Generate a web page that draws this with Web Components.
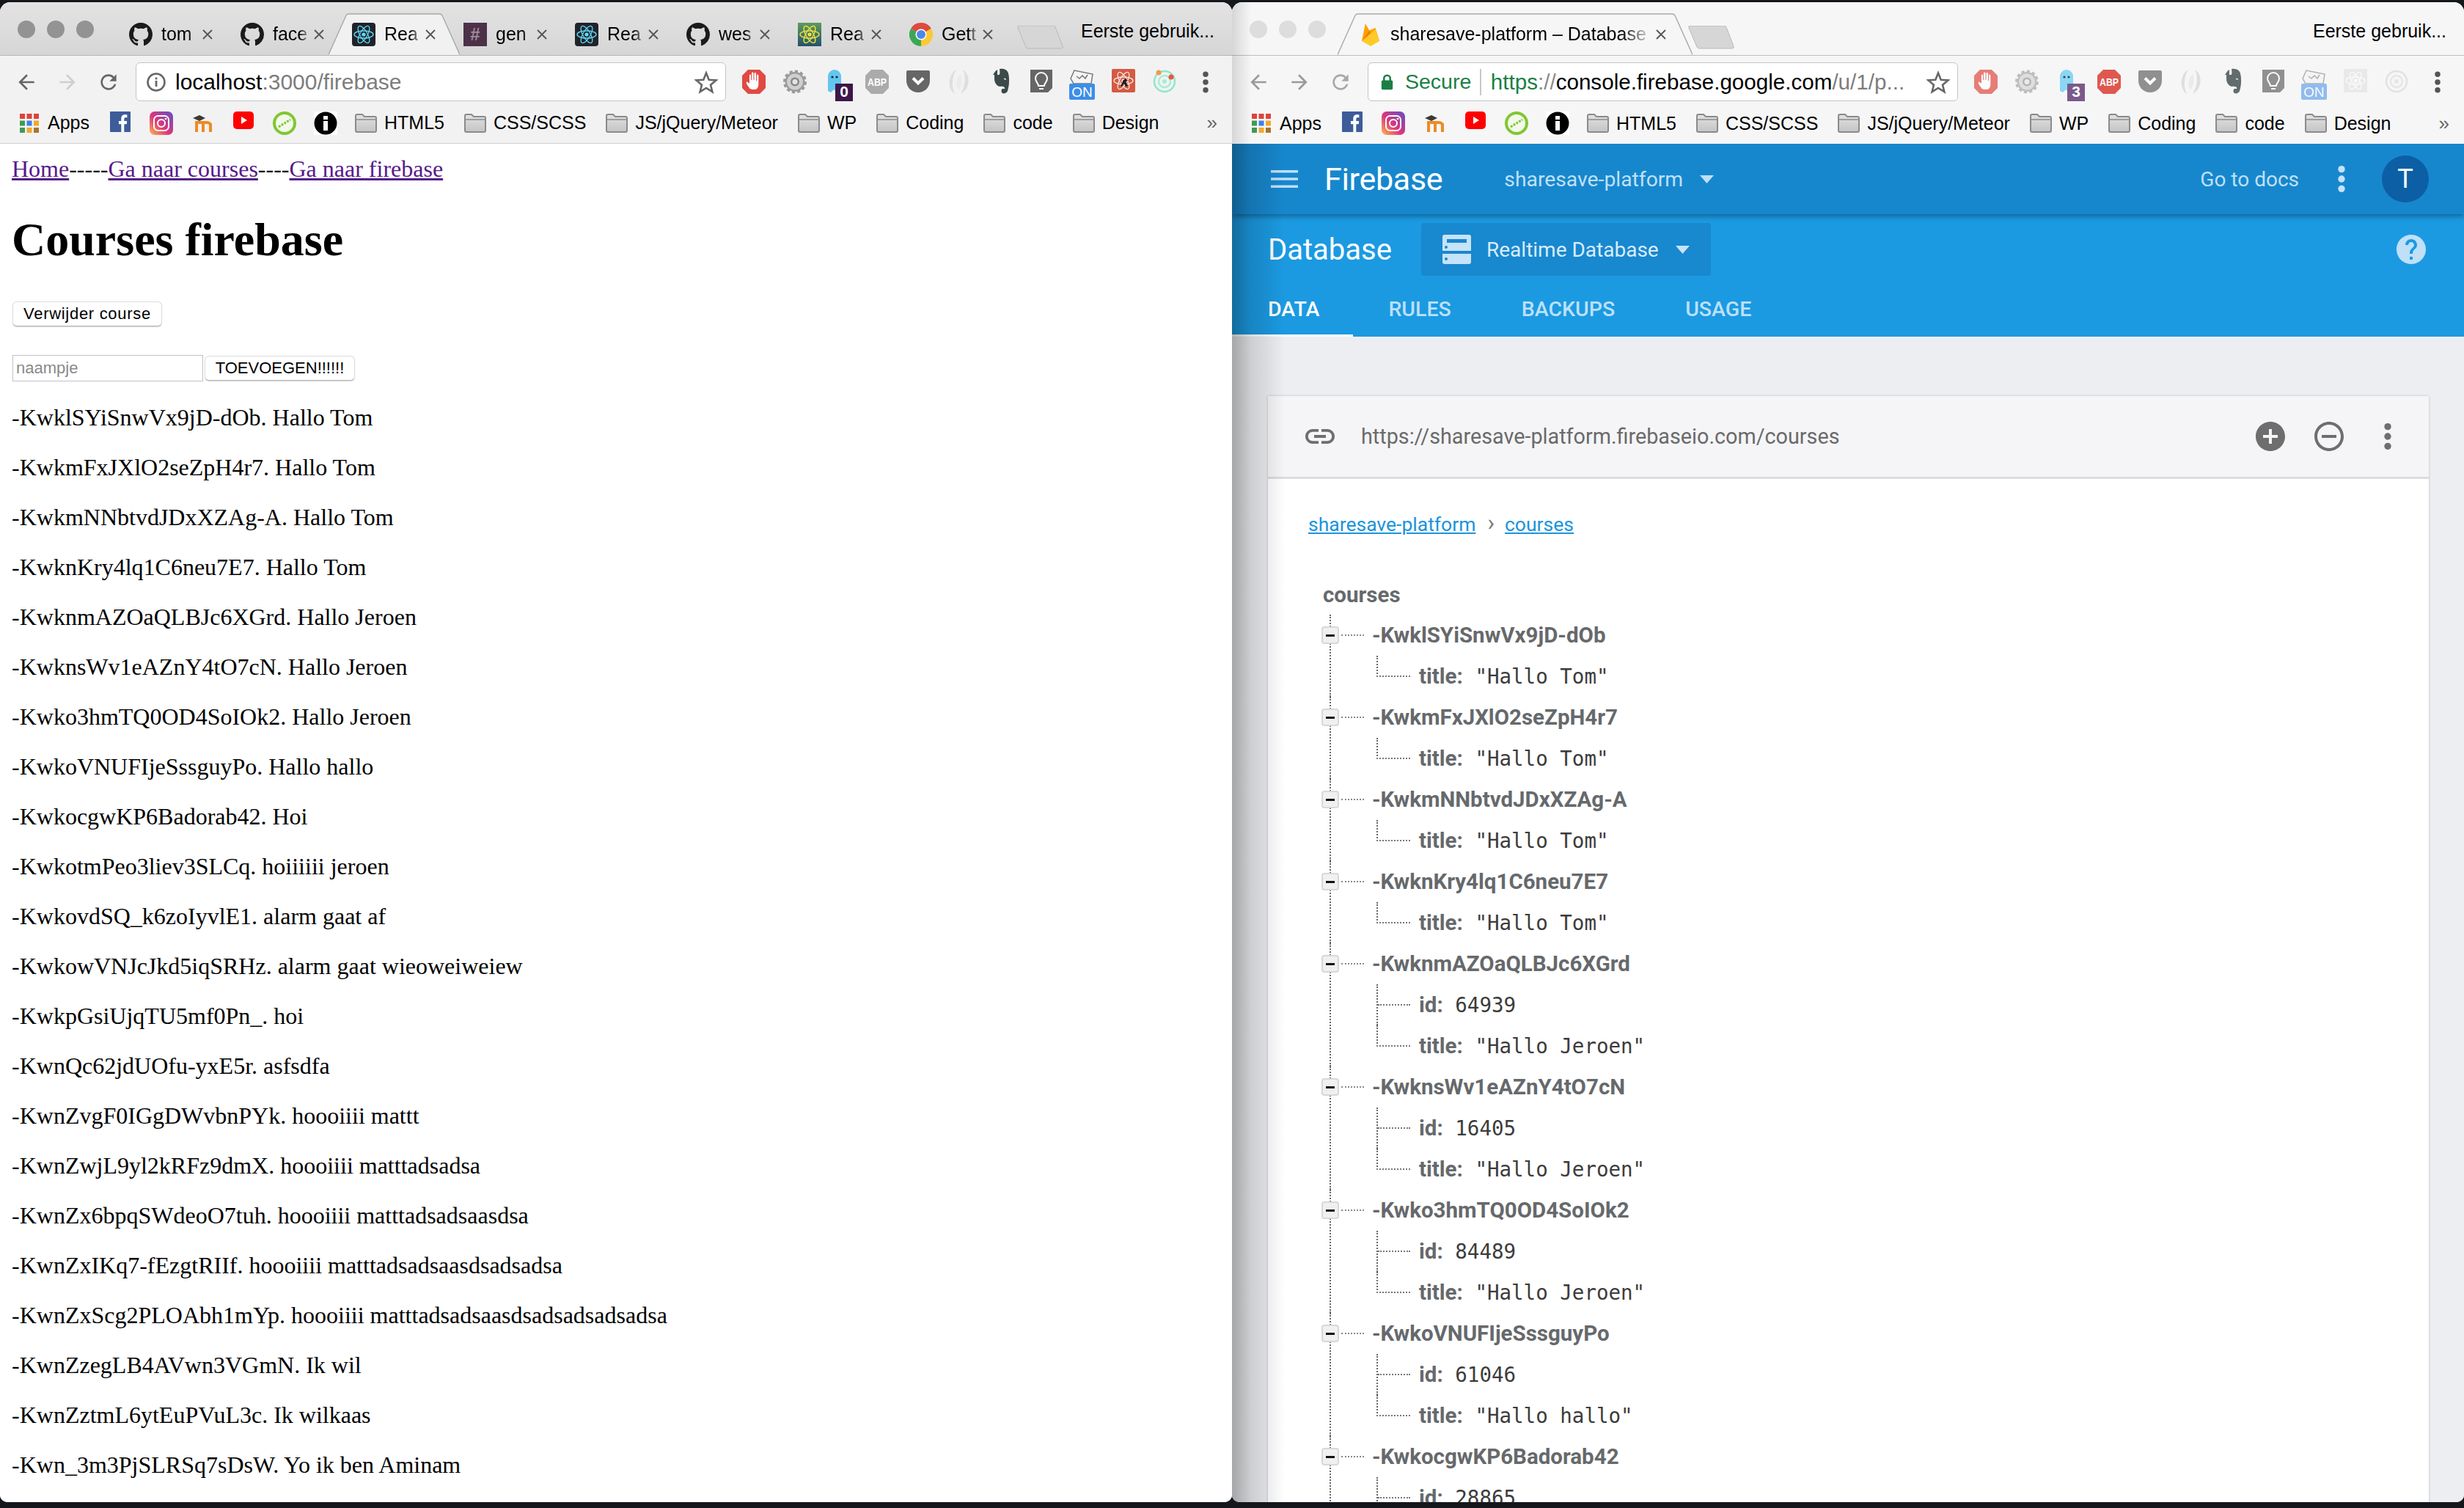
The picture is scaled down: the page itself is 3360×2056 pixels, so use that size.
<!DOCTYPE html>
<html lang="nl">
<head>
<meta charset="utf-8">
<title>Courses firebase</title>
<style>
  html, body { margin: 0; height: 100%; }
  body {
    display: flex;
    box-sizing: border-box;
    width: 3360px;
    height: 2056px;
    padding: 3px 0 8px;
    background: #14181c;
    overflow: hidden;
    font-family: "Liberation Sans", sans-serif;
  }
</style>
</head>
<body>

<browser-window>
  <browser-tab slot="tabs" icon="github" title-text="tom"></browser-tab>
  <browser-tab slot="tabs" icon="github" title-text="face"></browser-tab>
  <browser-tab slot="tabs" icon="react" title-text="Rea" active></browser-tab>
  <browser-tab slot="tabs" icon="slack" title-text="gen"></browser-tab>
  <browser-tab slot="tabs" icon="react" title-text="Rea"></browser-tab>
  <browser-tab slot="tabs" icon="github" title-text="wes"></browser-tab>
  <browser-tab slot="tabs" icon="reactyellow" title-text="Rea"></browser-tab>
  <browser-tab slot="tabs" icon="chrome" title-text="Gett"></browser-tab>
  <omni-box slot="omni" info>
    <span style="color:#000">localhost</span><span style="color:#7d7d7d">:3000/firebase</span>
  </omni-box>
  <courses-page>
    <course-line>-KwklSYiSnwVx9jD-dOb. Hallo Tom</course-line>
    <course-line>-KwkmFxJXlO2seZpH4r7. Hallo Tom</course-line>
    <course-line>-KwkmNNbtvdJDxXZAg-A. Hallo Tom</course-line>
    <course-line>-KwknKry4lq1C6neu7E7. Hallo Tom</course-line>
    <course-line>-KwknmAZOaQLBJc6XGrd. Hallo Jeroen</course-line>
    <course-line>-KwknsWv1eAZnY4tO7cN. Hallo Jeroen</course-line>
    <course-line>-Kwko3hmTQ0OD4SoIOk2. Hallo Jeroen</course-line>
    <course-line>-KwkoVNUFIjeSssguyPo. Hallo hallo</course-line>
    <course-line>-KwkocgwKP6Badorab42. Hoi</course-line>
    <course-line>-KwkotmPeo3liev3SLCq. hoiiiiii jeroen</course-line>
    <course-line>-KwkovdSQ_k6zoIyvlE1. alarm gaat af</course-line>
    <course-line>-KwkowVNJcJkd5iqSRHz. alarm gaat wieoweiweiew</course-line>
    <course-line>-KwkpGsiUjqTU5mf0Pn_. hoi</course-line>
    <course-line>-KwnQc62jdUOfu-yxE5r. asfsdfa</course-line>
    <course-line>-KwnZvgF0IGgDWvbnPYk. hoooiiii mattt</course-line>
    <course-line>-KwnZwjL9yl2kRFz9dmX. hoooiiii matttadsadsa</course-line>
    <course-line>-KwnZx6bpqSWdeoO7tuh. hoooiiii matttadsadsaasdsa</course-line>
    <course-line>-KwnZxIKq7-fEzgtRIIf. hoooiiii matttadsadsaasdsadsadsa</course-line>
    <course-line>-KwnZxScg2PLOAbh1mYp. hoooiiii matttadsadsaasdsadsadsadsadsa</course-line>
    <course-line>-KwnZzegLB4AVwn3VGmN. Ik wil</course-line>
    <course-line>-KwnZztmL6ytEuPVuL3c. Ik wilkaas</course-line>
    <course-line>-Kwn_3m3PjSLRSq7sDsW. Yo ik ben Aminam</course-line>
  </courses-page>
</browser-window>

<browser-window inactive>
  <browser-tab slot="tabs" icon="firebase" title-text="sharesave-platform – Database" active wide></browser-tab>
  <omni-box slot="omni" secure>
    <span style="color:#1a7f45">https</span><span style="color:#8a8a8a">://</span><span style="color:#000">console.firebase.google.com</span><span style="color:#7d7d7d">/u/1/p...</span>
  </omni-box>
  <fb-console>
    <fb-node key="-KwklSYiSnwVx9jD-dOb"><fb-leaf name="title" value='"Hallo Tom"' last></fb-leaf></fb-node>
    <fb-node key="-KwkmFxJXlO2seZpH4r7"><fb-leaf name="title" value='"Hallo Tom"' last></fb-leaf></fb-node>
    <fb-node key="-KwkmNNbtvdJDxXZAg-A"><fb-leaf name="title" value='"Hallo Tom"' last></fb-leaf></fb-node>
    <fb-node key="-KwknKry4lq1C6neu7E7"><fb-leaf name="title" value='"Hallo Tom"' last></fb-leaf></fb-node>
    <fb-node key="-KwknmAZOaQLBJc6XGrd"><fb-leaf name="id" value="64939"></fb-leaf><fb-leaf name="title" value='"Hallo Jeroen"' last></fb-leaf></fb-node>
    <fb-node key="-KwknsWv1eAZnY4tO7cN"><fb-leaf name="id" value="16405"></fb-leaf><fb-leaf name="title" value='"Hallo Jeroen"' last></fb-leaf></fb-node>
    <fb-node key="-Kwko3hmTQ0OD4SoIOk2"><fb-leaf name="id" value="84489"></fb-leaf><fb-leaf name="title" value='"Hallo Jeroen"' last></fb-leaf></fb-node>
    <fb-node key="-KwkoVNUFIjeSssguyPo"><fb-leaf name="id" value="61046"></fb-leaf><fb-leaf name="title" value='"Hallo hallo"' last></fb-leaf></fb-node>
    <fb-node key="-KwkocgwKP6Badorab42"><fb-leaf name="id" value="28865"></fb-leaf></fb-node>
  </fb-console>
</browser-window>

<script>
const reactAtom = (c, sw) => `
  <g fill="none" stroke="${c}" stroke-width="${sw}">
    <ellipse cx="16" cy="16" rx="13" ry="5"/>
    <ellipse cx="16" cy="16" rx="13" ry="5" transform="rotate(60 16 16)"/>
    <ellipse cx="16" cy="16" rx="13" ry="5" transform="rotate(120 16 16)"/>
  </g><circle cx="16" cy="16" r="2.6" fill="${c}"/>`;

const ICONS = {
  github: ['0 0 16 16', '<path fill="#1b1b1b" d="M8 0C3.58 0 0 3.58 0 8c0 3.54 2.29 6.53 5.47 7.59.4.07.55-.17.55-.38 0-.19-.01-.82-.01-1.49-2.01.37-2.53-.49-2.69-.94-.09-.23-.48-.94-.82-1.13-.28-.15-.68-.52-.01-.53.63-.01 1.08.58 1.23.82.72 1.21 1.87.87 2.33.66.07-.52.28-.87.51-1.07-1.78-.2-3.64-.89-3.64-3.95 0-.87.31-1.59.82-2.15-.08-.2-.36-1.02.08-2.12 0 0 .67-.21 2.2.82.64-.18 1.32-.27 2-.27.68 0 1.36.09 2 .27 1.53-1.04 2.2-.82 2.2-.82.44 1.1.16 1.92.08 2.12.51.56.82 1.27.82 2.15 0 3.07-1.87 3.75-3.65 3.95.29.25.54.73.54 1.48 0 1.07-.01 1.93-.01 2.2 0 .21.15.46.55.38A8.013 8.013 0 0016 8c0-4.42-3.58-8-8-8z"/>'],
  react: ['0 0 32 32', `<rect width="32" height="32" rx="4" fill="#20232a"/>${reactAtom('#61dafb', 1.3)}`],
  reactyellow: ['0 0 32 32', `<defs><linearGradient id="ry" x1="0" y1="0" x2="0" y2="1"><stop offset="0" stop-color="#5f9a5c"/><stop offset="1" stop-color="#24506f"/></linearGradient></defs><rect width="32" height="32" fill="url(#ry)"/>${reactAtom('#f2e23c', 1.4)}`],
  slack: ['0 0 32 32', '<rect width="32" height="32" fill="#4c3149"/><text x="16" y="24" font-family="Liberation Sans" font-size="24" font-weight="700" fill="#9d8a9c" text-anchor="middle">#</text>'],
  chrome: ['0 0 32 32', '<path fill="#de4a3d" d="M16 16 2.14 8A16 16 0 0 1 29.86 8Z"/><path fill="#3aa757" d="M16 16 2.14 8A16 16 0 0 0 16 32Z"/><path fill="#fcc934" d="M16 16 29.86 8A16 16 0 0 1 16 32Z"/><circle cx="16" cy="16" r="7.6" fill="#fff"/><circle cx="16" cy="16" r="6" fill="#4b88e8"/>'],
  firebase: ['0 0 26 32', '<path fill="#ffa000" d="M1 25 5.8 1l5.4 9.5L19.6 7 25 25Z"/><path fill="#f57c00" d="M1 25 11.2 10.5 14 16Z"/><path fill="#ffca28" d="M1 25 19.6 9 25 25 13 32Z"/>'],
  back: ['0 0 24 24', '<path fill="currentColor" d="M20 11H7.83l5.59-5.59L12 4l-8 8 8 8 1.41-1.41L7.83 13H20v-2z"/>'],
  forward: ['0 0 24 24', '<path fill="currentColor" d="m12 4-1.41 1.41L16.17 11H4v2h12.17l-5.58 5.59L12 20l8-8z"/>'],
  reload: ['0 0 24 24', '<path fill="currentColor" d="M17.65 6.35C16.2 4.9 14.21 4 12 4c-4.42 0-7.99 3.58-7.99 8s3.57 8 7.99 8c3.73 0 6.84-2.55 7.73-6h-2.08c-.82 2.33-3.04 4-5.65 4-3.31 0-6-2.69-6-6s2.69-6 6-6c1.66 0 3.14.69 4.22 1.78L13 11h7V4l-2.35 2.35z"/>'],
  info: ['0 0 28 28', '<circle cx="14" cy="14" r="11.5" fill="none" stroke="#666" stroke-width="2.6"/><rect x="12.6" y="12" width="2.8" height="8" fill="#666"/><rect x="12.6" y="7.6" width="2.8" height="2.8" fill="#666"/>'],
  lock: ['0 0 20 28', '<path fill="none" stroke="#1a7f45" stroke-width="3" d="M5 12V8a5 5 0 0 1 10 0v4"/><rect x="1" y="11" width="18" height="15" rx="2" fill="#1a7f45"/>'],
  star: ['0 0 32 32', '<path fill="none" stroke="#666" stroke-width="2.6" stroke-linejoin="miter" d="M16 3.5 19.7 12.7 29.5 13.4 22 19.7 24.4 29.2 16 24 7.6 29.2 10 19.7 2.5 13.4 12.3 12.7Z"/>'],
  menu: ['0 0 6 24', '<circle cx="3" cy="4" r="2.8" fill="currentColor"/><circle cx="3" cy="12" r="2.8" fill="currentColor"/><circle cx="3" cy="20" r="2.8" fill="currentColor"/>'],
  apps: ['0 0 26 26', ['#e0433a','#e0433a','#e0433a','#3e9b53','#3f80e8','#f2a82d','#3e9b53','#f2a82d','#a9752c'].map((c, i) => `<rect x="${(i % 3) * 9.5}" y="${Math.floor(i / 3) * 9.5}" width="7" height="7" fill="${c}"/>`).join('')],
  facebook: ['0 0 28 28', '<rect width="28" height="28" rx="1" fill="#3e5c9a"/><path fill="#fff" d="M19.3 28V17.2h3.4l.5-4.2h-3.9v-2.7c0-1.2.3-2 2-2h2.1V4.5c-.4 0-1.6-.2-3-.2-3 0-5.1 1.8-5.1 5.2V13h-3.4v4.2h3.4V28Z"/>'],
  instagram: ['0 0 32 32', '<defs><linearGradient id="ig" x1="0" y1="1" x2="1" y2="0"><stop offset="0" stop-color="#fdb94a"/><stop offset=".45" stop-color="#e0347a"/><stop offset="1" stop-color="#5c52c8"/></linearGradient></defs><rect width="32" height="32" rx="7" fill="url(#ig)"/><rect x="6" y="6" width="20" height="20" rx="5.5" fill="none" stroke="#fff" stroke-width="2"/><circle cx="16" cy="16" r="5" fill="none" stroke="#fff" stroke-width="2"/><circle cx="22" cy="10" r="1.3" fill="#fff"/>'],
  moodle: ['0 0 32 32', '<path fill="none" stroke="#f08a24" stroke-width="4" d="M8 28V15M17 28V16M27 28V16M6 15h16c3.5 0 5 2 5 4"/><path fill="#3a3a3a" d="M3 9l9-4 8 4-8 4Z"/>'],
  youtube: ['0 0 28 24', '<rect width="28" height="24" rx="5" fill="#f00"/><path fill="#fff" d="M11 7v10l8-5Z"/>'],
  greenring: ['0 0 32 32', '<circle cx="16" cy="16" r="14" fill="#f4f8ea" stroke="#7ec832" stroke-width="4"/><path fill="none" stroke="#7ec832" stroke-width="3" stroke-dasharray="3 1.4" d="M8 21 24 11"/>'],
  infoblack: ['0 0 32 32', '<rect width="32" height="32" fill="#fff"/><circle cx="16" cy="16" r="15.5" fill="#000"/><rect x="13" y="13" width="6" height="13" fill="#fff"/><rect x="13" y="6" width="6" height="5" fill="#fff"/>'],
  folder: ['0 0 30 26', '<defs><linearGradient id="fd" x1="0" y1="0" x2="0" y2="1"><stop offset="0" stop-color="#e2e2e2"/><stop offset="1" stop-color="#c4c4c4"/></linearGradient></defs><path fill="url(#fd)" stroke="#8b8b8b" stroke-width="2" d="M1 3a2 2 0 0 1 2-2h7l3 3h14a2 2 0 0 1 2 2v17a2 2 0 0 1-2 2H3a2 2 0 0 1-2-2Z"/><path fill="none" stroke="#8b8b8b" stroke-width="1.4" d="M1 8h28"/>'],
  link: ['0 0 24 24', '<path fill="currentColor" d="M3.9 12c0-1.71 1.39-3.1 3.1-3.1h4V7H7c-2.76 0-5 2.24-5 5s2.24 5 5 5h4v-1.9H7c-1.71 0-3.1-1.39-3.1-3.1zM8 13h8v-2H8v2zm9-6h-4v1.9h4c1.71 0 3.1 1.39 3.1 3.1s-1.39 3.1-3.1 3.1h-4V17h4c2.76 0 5-2.24 5-5s-2.24-5-5-5z"/>'],
  add: ['0 0 24 24', '<path fill="currentColor" d="M12 2C6.48 2 2 6.48 2 12s4.48 10 10 10 10-4.48 10-10S17.52 2 12 2zm5 11h-4v4h-2v-4H7v-2h4V7h2v4h4v2z"/>'],
  remove: ['0 0 24 24', '<path fill="currentColor" d="M7 11v2h10v-2H7zm5-9C6.48 2 2 6.48 2 12s4.48 10 10 10 10-4.48 10-10S17.52 2 12 2zm0 18c-4.41 0-8-3.59-8-8s3.59-8 8-8 8 3.59 8 8-3.59 8-8 8z"/>'],
  help: ['0 0 24 24', '<path fill="currentColor" d="M12 2C6.48 2 2 6.48 2 12s4.48 10 10 10 10-4.48 10-10S17.52 2 12 2zm1 17h-2v-2h2v2zm2.07-7.75l-.9.92C13.45 12.9 13 13.5 13 15h-2v-.5c0-1.1.45-2.1 1.17-2.83l1.24-1.26c.37-.36.59-.86.59-1.41 0-1.1-.9-2-2-2s-2 .9-2 2H8c0-2.21 1.79-4 4-4s4 1.79 4 4c0 .88-.36 1.68-.93 2.25z"/>'],
  storage: ['0 0 39 40', '<path fill="#c6e3f7" fill-rule="evenodd" d="M3 0h33a3 3 0 0 1 3 3v19H0V3a3 3 0 0 1 3-3ZM6 6v5h27V6ZM0 26h39v11a3 3 0 0 1-3 3H3a3 3 0 0 1-3-3Z"/><circle cx="5" cy="17" r="2" fill="#1888cf"/><circle cx="5" cy="33" r="2" fill="#1888cf"/>'],
  hamburger: ['0 0 37 24', '<path fill="currentColor" d="M0 0h37v3.6H0zM0 10.2h37v3.6H0zM0 20.4h37V24H0z"/>'],
  caret: ['0 0 19 11', '<path fill="currentColor" d="M0 0h19L9.5 11Z"/>'],
  adblock: ['0 0 56 53', '<path fill="#e04a42" d="M20 10h16l8 8v17l-8 8H20l-8-8V18Z"/><path fill="#fff" d="M22 35c-3-4-5-7-4-8s3 1 4 2V18c0-2 2-2 2 0v6h1V15c0-2 2.500-2 2.500 0v9h1V15.500c0-2 2.500-2 2.500 0V25h1v-7c0-2 2.300-2 2.300 0v12c0 4-2 7-5 7h-3c-2 0-3-1-5-2Z"/>'],
  gear: ['0 0 56 53', '<circle cx="28" cy="26.500" r="13.500" fill="#9a9a9a" stroke="#9a9a9a" stroke-width="5" stroke-dasharray="4 3"/><circle cx="28" cy="26.500" r="11" fill="#cfcfcf"/><circle cx="28" cy="26.500" r="6" fill="#888"/><circle cx="28" cy="26.500" r="3.500" fill="#e4e4e4"/>'],
  ghostdark: ['0 0 56 53', '<path fill="#62c6f0" d="M17 39V19a9 9 0 0 1 18 0v12l2 9-4-3-4 4-4-4-4 4Z"/><circle cx="23" cy="20" r="1.600" fill="#123"/><circle cx="29" cy="20" r="1.600" fill="#123"/><rect x="27" y="29" width="24" height="24" fill="#3c1748"/><text x="39" y="47" font-family="Liberation Sans" font-size="21" font-weight="700" fill="#fff" text-anchor="middle">0</text>'],
  ghostlight: ['0 0 56 53', '<path fill="#8bd6f4" d="M17 39V19a9 9 0 0 1 18 0v12l2 9-4-3-4 4-4-4-4 4Z"/><circle cx="23" cy="20" r="1.600" fill="#345"/><circle cx="29" cy="20" r="1.600" fill="#345"/><rect x="27" y="29" width="24" height="24" fill="#7a5a8c"/><text x="39" y="47" font-family="Liberation Sans" font-size="21" font-weight="700" fill="#fff" text-anchor="middle">3</text>'],
  abpgray: ['0 0 56 53', '<path fill="#ababab" d="M20 10h16l8 8v17l-8 8H20l-8-8V18Z"/><text x="28" y="32" font-family="Liberation Sans" font-size="14" font-weight="700" fill="#fff" text-anchor="middle" textLength="26" lengthAdjust="spacingAndGlyphs">ABP</text>'],
  abpred: ['0 0 56 53', '<path fill="#de5850" d="M20 10h16l8 8v17l-8 8H20l-8-8V18Z"/><text x="28" y="32" font-family="Liberation Sans" font-size="14" font-weight="700" fill="#fff" text-anchor="middle" textLength="26" lengthAdjust="spacingAndGlyphs">ABP</text>'],
  pocket: ['0 0 56 53', '<path fill="currentColor" d="M14 11h28a2 2 0 0 1 2 2v12c0 9-7 16-16 16S12 34 12 25V13a2 2 0 0 1 2-2Z"/><path fill="none" stroke="#fff" stroke-width="4" d="M21 21.500 28 28.500 35 21.500"/>'],
  swirl: ['0 0 56 53', '<path fill="#dedede" d="M24 10C13 16 11 36 22 43 17 33 18 20 24 10ZM33 10C44 17 43 36 30 43 36 33 38 20 33 10Z"/><path fill="#ebebeb" d="M30 16C23 22 23 32 27 38 32 31 33 23 30 16Z"/>'],
  evernote: ['0 0 56 53', '<path fill="currentColor" d="M20 14c2-3 4-4 4-4v7h-6Zm7-5c7-1 11 2 12 6 2 8 1 18-1 24-1 3-5 4-7 3-2-1-2-5 0-6h3c1-1-1-4-6-3-3 0-7-3-8-9 0-3 0-5 0-7h6c1 0 2-1 1-8Z"/><path fill="#f4f4f5" d="M33 22c2-.6 3 .4 3 2-1-.6-2-.9-3-.6Z"/>'],
  bulb: ['0 0 56 53', '<path fill="currentColor" d="M13 10h30v25l-6 6H13Z"/><path fill="none" stroke="#fff" stroke-width="2" d="M24 32c0-4-4-5-4-10a8 8 0 0 1 16 0c0 5-4 6-4 10ZM25 36h6"/>'],
  onoff: ['0 0 56 53', '<path fill="#f4f4f4" stroke="#777" stroke-width="1.500" d="M12 22l5-11 25 5-2 13H16Z"/><path fill="none" stroke="#777" stroke-width="1.500" d="M20 19l4 3 4-4 4 4 3-5"/><rect x="10" y="29" width="35" height="22" rx="2" fill="currentColor"/><text x="27.500" y="47" font-family="Liberation Sans" font-size="19" fill="#fff" text-anchor="middle">ON</text>'],
  reactred: ['0 0 56 53', `<rect x="12" y="9" width="32" height="32" rx="2" fill="#d55a42"/><svg x="12" y="9" width="32" height="32" viewBox="0 0 32 32">${reactAtom('#f3e7e3', 1.3)}<path d="M15 16l4-3 3 3-3 1 3 6-3 1-2-4-3 4-2-1 3-5Z" fill="#1e1e1e"/></svg>`],
  reactfaded: ['0 0 56 53', `<rect x="12" y="9" width="32" height="32" fill="#e9e9ea"/><svg x="12" y="9" width="32" height="32" viewBox="0 0 32 32">${reactAtom('#fafafa', 1.3)}</svg>`],
  orbit: ['0 0 56 53', '<circle cx="28" cy="26" r="14" fill="none" stroke="#8fe8c6" stroke-width="2.500"/><circle cx="28" cy="26" r="8" fill="none" stroke="#a5eed2" stroke-width="2.500"/><circle cx="28" cy="26" r="3" fill="#a5eed2"/><circle cx="20" cy="14" r="3.500" fill="#ef9a50"/><circle cx="37" cy="20" r="3.500" fill="#e8573f"/>'],
  orbitfaded: ['0 0 56 53', '<circle cx="28" cy="26" r="14" fill="none" stroke="#e2e2e3" stroke-width="2.500"/><circle cx="28" cy="26" r="8" fill="none" stroke="#e6e6e7" stroke-width="2.500"/><circle cx="28" cy="26" r="3" fill="#e6e6e7"/>']
};

class UiIcon extends HTMLElement {
  static get observedAttributes() { return ['name', 'w', 'h']; }

  constructor() {
    super();
    this.attachShadow({mode: 'open'});
  }

  connectedCallback() { this.render(); }
  attributeChangedCallback() { this.render(); }

  render() {
    const icon = ICONS[this.getAttribute('name')];
    if (!icon) return;
    const w = this.getAttribute('w') || 24;
    const h = this.getAttribute('h') || w;
    this.shadowRoot.innerHTML = `<style>
      :host { display: inline-flex; flex: none; line-height: 0; }
    </style><svg width="${w}" height="${h}" viewBox="${icon[0]}">${icon[1]}</svg>`;
  }
}
customElements.define('ui-icon', UiIcon);

const template_tab = document.createElement('template');
template_tab.innerHTML = `
<style>
  :host {
    display: flex;
    align-items: center;
    flex: none;
    position: relative;
    box-sizing: border-box;
    width: 179px;
    height: 57px;
    margin-right: -27px;
    padding: 0 33px 0 32px;
    font: 25px "Liberation Sans", sans-serif;
    color: #000;
  }
  :host([active]) { z-index: 1; }
  :host([wide]) { width: 484px; padding-right: 36px; margin-right: -6px; }
  svg.shape { position: absolute; left: 0; top: 0; z-index: -1; }
  .title {
    flex: 1;
    min-width: 0;
    margin: 0 4px 0 12px;
    white-space: nowrap;
    overflow: hidden;
    -webkit-mask-image: linear-gradient(to right, #000 70%, transparent 100%);
            mask-image: linear-gradient(to right, #000 70%, transparent 100%);
  }
  :host([wide]) .title {
    margin-left: 14px;
    -webkit-mask-image: linear-gradient(to right, #000 88%, transparent 100%);
            mask-image: linear-gradient(to right, #000 88%, transparent 100%);
  }
  .close { flex: none; width: 14px; height: 14px; }
</style>
<svg class="shape"></svg>
<ui-icon></ui-icon>
<span class="title"></span>
<svg class="close" viewBox="0 0 14 14"><path d="M1 1l12 12M13 1 1 13" stroke="#555" stroke-width="1.800" fill="none"/></svg>
`;

class BrowserTab extends HTMLElement {
  constructor() {
    super();
    this.attachShadow({mode: 'open'});
    this.shadowRoot.appendChild(template_tab.content.cloneNode(true));
  }

  connectedCallback() {
    const wide = this.hasAttribute('wide');
    const active = this.hasAttribute('active');
    const w = wide ? 484 : 179;
    const icon = this.shadowRoot.querySelector('ui-icon');
    const name = this.getAttribute('icon');
    icon.setAttribute('w', name === 'firebase' ? 26 : 32);
    icon.setAttribute('h', 32);
    icon.setAttribute('name', name);
    this.shadowRoot.querySelector('.title').textContent = this.getAttribute('title-text');
    const shape = this.shadowRoot.querySelector('.shape');
    shape.setAttribute('width', w);
    shape.setAttribute('height', 57);
    const fill = wide ? '#f6f6f7' : active ? '#f1f1f2' : '#cfcfcf';
    const stroke = wide ? '#a9a9a9' : '#a8a8a8';
    shape.innerHTML = `<path fill="${fill}" d="M0 57 24 3Q25 1 28 1H${w - 28}Q${w - 25} 1 ${w - 24} 3L${w} 57Z"/>
      <path fill="none" stroke="${stroke}" stroke-width="1.400" d="M0 56.500 24 3Q25 1 28 1H${w - 28}Q${w - 25} 1 ${w - 24} 3L${w} 56.500"/>`;
  }
}
customElements.define('browser-tab', BrowserTab);

const template_omni = document.createElement('template');
template_omni.innerHTML = `
<style>
  :host {
    display: flex;
    align-items: center;
    box-sizing: border-box;
    width: 805px;
    height: 53px;
    margin-left: 21px;
    background: #fff;
    border: 1.500px solid #c4c4c4;
    border-radius: 6px;
    font: 30px "Liberation Sans", sans-serif;
    white-space: nowrap;
  }
  :host([secure]) { font-size: 29.600px; }
  .lead { display: flex; align-items: center; flex: none; }
  .secure { color: #1a7f45; margin-left: 16px; font-size: 28.500px; }
  .sep { width: 1.500px; height: 36px; background: #c8c8c8; margin: 0 13px 0 12px; }
  .url { flex: 1; min-width: 0; overflow: hidden; }
  ui-icon.star { margin: 0 10px 0 0; }
</style>
<span class="lead"></span>
<span class="url"><slot></slot></span>
<ui-icon class="star" name="star" w="32"></ui-icon>
`;

class OmniBox extends HTMLElement {
  constructor() {
    super();
    this.attachShadow({mode: 'open'});
    this.shadowRoot.appendChild(template_omni.content.cloneNode(true));
  }

  connectedCallback() {
    const lead = this.shadowRoot.querySelector('.lead');
    if (this.hasAttribute('secure')) {
      lead.innerHTML = `<ui-icon name="lock" w="17" h="24" style="margin-left:17px"></ui-icon>
        <span class="secure">Secure</span><span class="sep"></span>`;
    } else {
      lead.innerHTML = `<ui-icon name="info" w="28" style="margin:0 12px 0 13px"></ui-icon>`;
    }
  }
}
customElements.define('omni-box', OmniBox);

const template_ext = document.createElement('template');
template_ext.innerHTML = `
<style>
  :host { display: flex; margin-left: 10px; height: 53px; align-items: center; color: #666; }
  .slot { width: 56px; display: flex; justify-content: center; flex: none; }
</style>
<span class="row" style="display:contents"></span>
`;

class ExtBar extends HTMLElement {
  static get observedAttributes() { return ['faded']; }

  constructor() {
    super();
    this.attachShadow({mode: 'open'});
    this.shadowRoot.appendChild(template_ext.content.cloneNode(true));
  }

  connectedCallback() { this.render(); }
  attributeChangedCallback() { this.render(); }

  render() {
    const items = this.hasAttribute('faded')
      ? [['adblock', .7], ['gear', .6], ['ghostlight', 1], ['abpred', 1], ['pocket', .7], ['swirl', 1], ['evernote', .8], ['bulb', .7], ['onoff', .55], ['reactfaded', 1], ['orbitfaded', 1]]
      : [['adblock', 1], ['gear', 1], ['ghostdark', 1], ['abpgray', 1], ['pocket', 1], ['swirl', 1], ['evernote', 1], ['bulb', 1], ['onoff', 1], ['reactred', 1], ['orbit', 1]];
    const colors = {pocket: '#666', evernote: '#3c4a4a', bulb: '#666', onoff: '#3d8ee8'};
    this.shadowRoot.querySelector('.row').innerHTML = items.map(([n, o]) =>
      `<span class="slot" style="opacity:${o};color:${colors[n] || '#666'}"><ui-icon name="${n}" w="56" h="53"></ui-icon></span>`
    ).join('') + `<span class="slot" style="color:#555"><ui-icon name="menu" w="8" h="32"></ui-icon></span>`;
  }
}
customElements.define('ext-bar', ExtBar);

const template_bookmarks = document.createElement('template');
template_bookmarks.innerHTML = `
<style>
  :host {
    display: flex;
    align-items: center;
    box-sizing: border-box;
    height: 56px;
    padding: 0 0 0 27px;
    font: 25px "Liberation Sans", sans-serif;
    color: #000;
    white-space: nowrap;
  }
  .apps { margin-right: 12px; }
  .apps-label { width: 71px; }
  .site { width: 56px; display: flex; justify-content: center; flex: none; }
  .sites { display: flex; margin-right: 12px; }
  .folder { display: flex; align-items: center; gap: 10px; margin-right: 27px; }
  .more { margin-left: auto; margin-right: 20px; color: #666; font-size: 26px; }
</style>
<ui-icon class="apps" name="apps" w="26"></ui-icon>
<span class="apps-label">Apps</span>
<span class="sites">
  <span class="site"><ui-icon name="facebook" w="28"></ui-icon></span>
  <span class="site"><ui-icon name="instagram" w="32"></ui-icon></span>
  <span class="site"><ui-icon name="moodle" w="32"></ui-icon></span>
  <span class="site"><ui-icon name="youtube" w="28" h="24"></ui-icon></span>
  <span class="site"><ui-icon name="greenring" w="32"></ui-icon></span>
  <span class="site"><ui-icon name="infoblack" w="32"></ui-icon></span>
</span>
<span class="folder"><ui-icon name="folder" w="30" h="26"></ui-icon>HTML5</span>
<span class="folder"><ui-icon name="folder" w="30" h="26"></ui-icon>CSS/SCSS</span>
<span class="folder"><ui-icon name="folder" w="30" h="26"></ui-icon>JS/jQuery/Meteor</span>
<span class="folder"><ui-icon name="folder" w="30" h="26"></ui-icon>WP</span>
<span class="folder"><ui-icon name="folder" w="30" h="26"></ui-icon>Coding</span>
<span class="folder"><ui-icon name="folder" w="30" h="26"></ui-icon>code</span>
<span class="folder"><ui-icon name="folder" w="30" h="26"></ui-icon>Design</span>
<span class="more">»</span>
`;

class BookmarkBar extends HTMLElement {
  constructor() {
    super();
    this.attachShadow({mode: 'open'});
    this.shadowRoot.appendChild(template_bookmarks.content.cloneNode(true));
  }
}
customElements.define('bookmark-bar', BookmarkBar);

const template_window = document.createElement('template');
template_window.innerHTML = `
<style>
  :host {
    display: flex;
    flex-direction: column;
    flex: none;
    position: relative;
    width: 1680px;
    height: 100%;
    overflow: hidden;
    border-radius: 14px 14px 10px 10px;
    background: #fff;
  }
  .strip {
    display: flex;
    align-items: flex-end;
    box-sizing: border-box;
    height: 73px;
    flex: none;
    padding-left: 24px;
    background: linear-gradient(#e4e3e3, #d6d6d6);
    border-bottom: 1.500px solid #b5b5b5;
  }
  :host([inactive]) .strip { background: #f6f6f7; border-bottom-color: #bdbdbd; }
  .lights {
    display: flex;
    gap: 16px;
    align-self: flex-start;
    margin: 25px 16px 0 0;
  }
  .lights span { width: 24px; height: 24px; border-radius: 50%; background: #939393; }
  :host([inactive]) .lights span { background: #dddddd; }
  .newtab { align-self: flex-start; margin: 32px 0 0 27px; flex: none; line-height: 0; }
  :host([inactive]) .newtab { margin-left: 0; }
  .profile {
    align-self: flex-start;
    margin: 24px 24px 0 auto;
    font: 25px/30px "Liberation Sans", sans-serif;
    color: #000;
    white-space: nowrap;
  }
  .toolbar {
    display: flex;
    align-items: flex-start;
    box-sizing: border-box;
    height: 64px;
    flex: none;
    padding: 9px 0 0 20px;
    background: #f2f2f3;
  }
  :host([inactive]) .toolbar { background: #f6f6f7; }
  .nav { display: flex; align-items: center; gap: 24px; height: 53px; }
  .back { color: #666; } .forward { color: #cfcfcf; } .reload { color: #666; }
  :host([inactive]) .back, :host([inactive]) .forward { color: #9a9a9a; }
  :host([inactive]) .reload { color: #a8a8a8; }
  bookmark-bar { flex: none; background: #f2f2f3; border-bottom: 1.500px solid #d0d0d0; }
  :host([inactive]) bookmark-bar { background: #f6f6f7; border-bottom: none; }
  .content { flex: 1; min-height: 0; overflow: hidden; display: flex; flex-direction: column; }
  :host([inactive])::before {
    content: '';
    position: absolute;
    left: 0; top: 0; bottom: 0;
    width: 26px;
    z-index: 5;
    background: linear-gradient(to right, rgba(0,0,0,.13), rgba(0,0,0,0));
  }
</style>
<div class="strip">
  <div class="lights"><span></span><span></span><span></span></div>
  <slot name="tabs"></slot>
  <svg class="newtab" width="63" height="32" viewBox="0 0 63 32"><path d="M3 0H49Q51 0 52 2L62 28Q63 31 60 31H15Q13 31 12 29L1 3Q0 0 3 0Z" fill="#d6d6d6" stroke="#b8b8b8" stroke-width="1"/></svg>
  <div class="profile">Eerste gebruik...</div>
</div>
<div class="toolbar">
  <div class="nav">
    <ui-icon class="back" name="back" w="32"></ui-icon>
    <ui-icon class="forward" name="forward" w="32"></ui-icon>
    <ui-icon class="reload" name="reload" w="32"></ui-icon>
  </div>
  <slot name="omni"></slot>
  <ext-bar></ext-bar>
</div>
<bookmark-bar></bookmark-bar>
<div class="content"><slot></slot></div>
`;

class BrowserWindow extends HTMLElement {
  constructor() {
    super();
    this.attachShadow({mode: 'open'});
    this.shadowRoot.appendChild(template_window.content.cloneNode(true));
  }

  connectedCallback() {
    if (this.hasAttribute('inactive')) {
      this.shadowRoot.querySelector('ext-bar').setAttribute('faded', '');
    }
  }
}
customElements.define('browser-window', BrowserWindow);

const template_line = document.createElement('template');
template_line.innerHTML = `
<style>
  :host { display: block; height: 36px; line-height: 36px; margin-bottom: 32px; white-space: nowrap; }
</style>
<slot></slot>
`;

class CourseLine extends HTMLElement {
  constructor() {
    super();
    this.attachShadow({mode: 'open'});
    this.shadowRoot.appendChild(template_line.content.cloneNode(true));
  }
}
customElements.define('course-line', CourseLine);

const template_courses = document.createElement('template');
template_courses.innerHTML = `
<style>
  :host {
    display: block;
    flex: 1;
    box-sizing: border-box;
    padding: 16px 16px 0;
    background: #fff;
    color: #000;
    font: 32px "Liberation Serif", serif;
    overflow: hidden;
  }
  a { color: #551a8b; }
  h1 { margin: 41px 0 0; font-size: 64px; line-height: 73px; font-weight: 700; }
  button {
    box-sizing: border-box;
    height: 34px;
    margin: 0;
    padding: 0;
    background: #fff;
    color: #000;
    border: 1px solid #dcdcdc;
    border-bottom-color: #b9b9b9;
    border-radius: 6px;
    box-shadow: 0 1px 1px rgba(0,0,0,.18);
    font: 22px "Liberation Sans", sans-serif;
  }
  .remove { display: block; width: 204px; margin: 48px 0 39px 1px; letter-spacing: .7px; }
  .add-row { display: flex; align-items: flex-start; margin: 0 0 31px 1px; }
  input {
    box-sizing: border-box;
    width: 260px;
    height: 36px;
    margin: 0 2px 0 0;
    padding: 0 4px;
    border: 1.500px solid #c3c0c8;
    font: 22px "Liberation Sans", sans-serif;
    background: #fff;
  }
  input::placeholder { color: #8a8a8a; opacity: 1; }
  .add { width: 205px; margin-top: 1px; }
</style>
<div><a href="#home">Home</a>-----<a href="#courses">Ga naar courses</a>----<a href="#firebase">Ga naar firebase</a></div>
<h1>Courses firebase</h1>
<button class="remove">Verwijder course</button>
<div class="add-row"><input placeholder="naampje"><button class="add">TOEVOEGEN!!!!!!</button></div>
<slot></slot>
`;

class CoursesPage extends HTMLElement {
  constructor() {
    super();
    this.attachShadow({mode: 'open'});
    this.shadowRoot.appendChild(template_courses.content.cloneNode(true));
  }
}
customElements.define('courses-page', CoursesPage);

const template_leaf = document.createElement('template');
template_leaf.innerHTML = `
<style>
  :host {
    display: flex;
    align-items: flex-start;
    box-sizing: border-box;
    height: 56px;
    border-left: 2px dotted #666;
  }
  :host([last]) { border-left-color: transparent; }
  .conn { flex: none; width: 44px; height: 29px; border-bottom: 2px dotted #777; box-sizing: border-box; }
  :host([last]) .conn { border-left: 2px dotted #666; margin-left: -2px; width: 46px; }
  .text { margin-left: 12px; line-height: 56px; white-space: nowrap; }
  b { font: 700 29.500px/56px Roboto, sans-serif; color: #66696c; }
  .val { font: 27.500px/56px "DejaVu Sans Mono", monospace; color: #3c3c3c; white-space: pre; }
</style>
<span class="conn"></span>
<span class="text"><b></b><span class="val"></span></span>
`;

class FbLeaf extends HTMLElement {
  constructor() {
    super();
    this.attachShadow({mode: 'open'});
    this.shadowRoot.appendChild(template_leaf.content.cloneNode(true));
  }

  connectedCallback() {
    this.shadowRoot.querySelector('b').textContent = this.getAttribute('name') + ':';
    this.shadowRoot.querySelector('.val').textContent = ' ' + this.getAttribute('value');
  }
}
customElements.define('fb-leaf', FbLeaf);

const template_node = document.createElement('template');
template_node.innerHTML = `
<style>
  :host { display: block; border-left: 2px dotted #666; }
  .row { display: flex; align-items: center; height: 56px; margin-left: -13px; }
  .box {
    flex: none;
    display: flex;
    align-items: center;
    justify-content: center;
    box-sizing: border-box;
    width: 24px;
    height: 24px;
    background: #f0f0f0;
    border: 2px solid #d8d8d8;
    border-radius: 4px;
  }
  .box::before { content: ''; width: 12px; height: 3px; background: #111; }
  .dash { flex: none; width: 31px; margin-left: 3px; border-top: 2px dotted #888; }
  .key { margin-left: 11px; font: 700 29.500px Roboto, sans-serif; color: #66696c; white-space: nowrap; }
  .kids { margin-left: 62px; }
</style>
<div class="row"><span class="box"></span><span class="dash"></span><span class="key"></span></div>
<div class="kids"><slot></slot></div>
`;

class FbNode extends HTMLElement {
  constructor() {
    super();
    this.attachShadow({mode: 'open'});
    this.shadowRoot.appendChild(template_node.content.cloneNode(true));
  }

  connectedCallback() {
    this.shadowRoot.querySelector('.key').textContent = this.getAttribute('key');
  }
}
customElements.define('fb-node', FbNode);

const template_console = document.createElement('template');
template_console.innerHTML = `
<style>
  :host {
    display: flex;
    flex-direction: column;
    flex: 1;
    min-height: 0;
    position: relative;
    background: #edeef1;
    font-family: Roboto, sans-serif;
  }
  :host::after {
    content: '';
    position: absolute;
    left: 0; top: 0; bottom: 0;
    width: 72px;
    background: linear-gradient(to right, rgba(0,0,0,.2), rgba(0,0,0,.08) 65%, rgba(0,0,0,0));
    z-index: 4;
  }
  header {
    display: flex;
    align-items: center;
    flex: none;
    position: relative;
    z-index: 2;
    height: 96px;
    padding: 0 48px 0 53px;
    background: #1787cd;
    box-shadow: 0 3px 7px rgba(0,0,0,.35);
    color: #bfe0f7;
  }
  .brand { margin-left: 36px; font-size: 43px; font-weight: 400; color: #fff; letter-spacing: -.3px; }
  .project { margin-left: 84px; font-size: 28.300px; }
  .caret { margin-left: 23px; }
  .docs { margin-left: auto; font-size: 28px; }
  .dots { margin: 0 49px 0 52px; color: #c4e2f8; }
  .avatar {
    display: flex;
    align-items: center;
    justify-content: center;
    width: 64px;
    height: 64px;
    border-radius: 50%;
    background: #0d5fa5;
    color: #fff;
    font-size: 36px;
  }
  .sub { flex: none; height: 167px; background: #1b9ae2; color: #fff; }
  .sub-top { display: flex; align-items: center; height: 96px; padding: 0 48px 0 49px; }
  .sub-title { font-size: 40px; width: 209px; }
  .picker {
    display: flex;
    align-items: center;
    box-sizing: border-box;
    width: 395px;
    height: 72px;
    padding-left: 29px;
    background: #1888cf;
    border-radius: 4px;
    font-size: 28px;
    color: #d8ecfa;
  }
  .picker span { margin-left: 21px; }
  .picker .caret { color: #c6e3f7; }
  .help { margin-left: auto; color: #bfe0f7; }
  .tabs { display: flex; height: 71px; }
  .tabs span {
    display: flex;
    align-items: center;
    box-sizing: border-box;
    height: 71px;
    padding: 0 48px 5px;
    font-size: 28.500px;
    font-weight: 500;
    color: #bde0f8;
  }
  .tabs .on { color: #fff; padding-left: 49px; padding-right: 46px; box-shadow: inset 0 -3px 0 #fff; }
  .main { flex: 1; min-height: 0; padding: 81px 48px 0 49px; overflow: hidden; }
  .card { background: #fff; box-shadow: 0 0 3px rgba(0,0,0,.22); min-height: 100%; }
  .card-bar {
    display: flex;
    align-items: center;
    box-sizing: border-box;
    height: 113px;
    padding-left: 47px;
    background: #f5f5f7;
    border-bottom: 3px solid #dcdcdc;
    color: #6e6e6e;
  }
  .db-url { margin-left: 32px; font-size: 28.750px; color: #6a6a6a; }
  .card-actions { display: flex; align-items: center; gap: 32px; margin-left: auto; margin-right: 32px; }
  .crumbs { display: flex; align-items: center; height: 34px; padding: 44px 0 0 55px; font-size: 26.500px; color: #777; }
  .crumbs a { color: #1a94dc; }
  .crumbs i { font-style: normal; font-size: 32px; margin: -4px 14px 0 16px; }
  .root { padding: 63px 0 0 75px; font-size: 29.500px; font-weight: 700; color: #66696c; line-height: 34px; }
  .tree { margin: 10px 0 0 84px; }
</style>
<header>
  <ui-icon name="hamburger" w="37" h="24"></ui-icon>
  <span class="brand">Firebase</span>
  <span class="project">sharesave-platform</span>
  <ui-icon class="caret" name="caret" w="19" h="11"></ui-icon>
  <span class="docs">Go to docs</span>
  <ui-icon class="dots" name="menu" w="12" h="40"></ui-icon>
  <span class="avatar">T</span>
</header>
<div class="sub">
  <div class="sub-top">
    <span class="sub-title">Database</span>
    <div class="picker">
      <ui-icon name="storage" w="39" h="40"></ui-icon>
      <span>Realtime Database</span>
      <ui-icon class="caret" name="caret" w="19" h="11"></ui-icon>
    </div>
    <ui-icon class="help" name="help" w="48"></ui-icon>
  </div>
  <div class="tabs"><span class="on">DATA</span><span>RULES</span><span>BACKUPS</span><span>USAGE</span></div>
</div>
<div class="main">
  <div class="card">
    <div class="card-bar">
      <ui-icon name="link" w="48"></ui-icon>
      <span class="db-url">https://sharesave-platform.firebaseio.com/courses</span>
      <div class="card-actions">
        <ui-icon name="add" w="48"></ui-icon>
        <ui-icon name="remove" w="48"></ui-icon>
        <ui-icon name="menu" w="12" h="40" style="margin:0 18px"></ui-icon>
      </div>
    </div>
    <div class="crumbs"><a href="#root">sharesave-platform</a><i>›</i><a href="#courses">courses</a></div>
    <div class="root">courses</div>
    <div class="tree"><slot></slot></div>
  </div>
</div>
`;

class FbConsole extends HTMLElement {
  constructor() {
    super();
    this.attachShadow({mode: 'open'});
    this.shadowRoot.appendChild(template_console.content.cloneNode(true));
  }
}
customElements.define('fb-console', FbConsole);
</script>
</body>
</html>
